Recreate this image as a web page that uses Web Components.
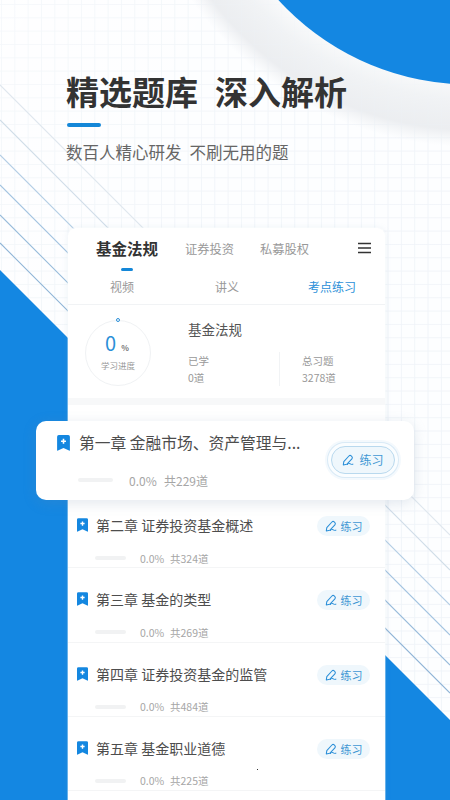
<!DOCTYPE html>
<html lang="zh">
<head>
<meta charset="utf-8">
<title>精选题库</title>
<style>
html,body{margin:0;padding:0;width:450px;height:800px;overflow:hidden;background:#fdfeff;font-family:"Noto Sans CJK SC","Noto Sans",sans-serif}
</style>
</head>
<body>
<promo-page>
  <hero-head title-a="精选题库" title-b="深入解析" sub-a="数百人精心研发" sub-b="不刷无用的题"></hero-head>
  <course-card>
    <course-tabs></course-tabs>
    <sub-nav></sub-nav>
    <progress-summary></progress-summary>
    <chapter-row lifted name="第一章 金融市场、资产管理与..." pct="0.0%" total="共229道"></chapter-row>
    <chapter-row name="第二章 证券投资基金概述" pct="0.0%" total="共324道"></chapter-row>
    <chapter-row name="第三章 基金的类型" pct="0.0%" total="共269道"></chapter-row>
    <chapter-row name="第四章 证券投资基金的监管" pct="0.0%" total="共484道"></chapter-row>
    <chapter-row name="第五章 基金职业道德" pct="0.0%" total="共225道"></chapter-row>
  </course-card>
</promo-page>
<script>
function def(name, html){
  customElements.define(name, class extends HTMLElement{
    constructor(){super();this.attachShadow({mode:'open'});}
    connectedCallback(){
      const a=n=>this.getAttribute(n)||'';
      this.shadowRoot.innerHTML=typeof html==='function'?html(a,this):html;
    }
  });
}
def('promo-page',`<style>
:host{display:block;position:relative;width:450px;height:800px;overflow:hidden;background:#fdfeff}
.art{position:absolute;inset:0;width:450px;height:800px;display:block}
.flow{position:relative;display:flex;flex-direction:column;height:800px}
.speck{position:absolute;left:257px;top:769px;width:1px;height:1px;background:#333}
</style>
<svg class="art" viewBox="0 0 450 800" aria-hidden="true">
<defs>
<pattern id="g" width="13.33" height="13.33" patternUnits="userSpaceOnUse" x="1" y="4">
<path d="M0 0H13.33M0 0V13.33" stroke="#eff4f9" stroke-width="1.5" fill="none"/>
</pattern>
<radialGradient id="sh" gradientUnits="userSpaceOnUse" cx="472" cy="-195" r="342">
<stop offset="0.76" stop-color="#ffffff" stop-opacity="1"/>
<stop offset="0.86" stop-color="#f1f3f5" stop-opacity="1"/>
<stop offset="0.95" stop-color="#e9ebee" stop-opacity=".85"/>
<stop offset="1" stop-color="#eef0f3" stop-opacity="0"/>
</radialGradient>
<linearGradient id="fade" x1="0" y1="0" x2="1" y2="1">
<stop offset="0" stop-color="#fff" stop-opacity=".55"/>
<stop offset=".35" stop-color="#fff" stop-opacity=".1"/>
<stop offset="1" stop-color="#fff" stop-opacity="0"/>
</linearGradient>
</defs>
<rect width="450" height="800" fill="#fdfeff"/>
<rect width="450" height="800" fill="url(#g)"/>
<rect width="450" height="800" fill="url(#fade)"/>
<circle cx="472" cy="-195" r="342" fill="url(#sh)"/>
<rect width="450" height="800" fill="url(#g)" opacity=".35"/>
<circle cx="470" cy="-175" r="259.5" fill="#1487e2"/>
<g fill="none" stroke-width="1.1">
<path d="M0 85L450 535" stroke="#dfe7ee"/>
<path d="M0 120L450 570" stroke="#d0dde8"/>
<path d="M0 155L450 605" stroke="#b4cee4"/>
<path d="M0 185L450 635" stroke="#a2c3e0"/>
<path d="M0 215L450 665" stroke="#97bbda"/>
<path d="M0 243L450 693" stroke="#8fb4d6"/>
</g>
<path d="M0 270L450 720V800H0Z" fill="#1487e2"/>
</svg>
<div class="flow"><slot></slot></div>
<div class="speck"></div>`);

def('hero-head',a=>`<style>
:host{display:block;height:228px;box-sizing:border-box;padding:68px 0 0 66px;color:#333;flex:none}
h1{margin:0;font:700 33px/46px "Noto Sans CJK SC",sans-serif;color:#333;display:flex;gap:17px}
i{display:block;width:34px;height:4px;border-radius:2px;background:#1487d8;margin:9px 0 0 1px}
p{margin:13px 0 0;font:400 16.5px/24px "Noto Sans CJK SC",sans-serif;color:#666;display:flex;gap:8px}
</style>
<h1><span>${a('title-a')}</span><span>${a('title-b')}</span></h1><i></i>
<p><span>${a('sub-a')}</span><span>${a('sub-b')}</span></p>`);

def('course-card',`<style>
:host{display:block;width:317px;margin-left:68px;flex:1;background:#fff;border-radius:8px 8px 0 0;box-shadow:0 0 6px rgba(130,160,190,.14);outline:1px solid rgba(255,255,255,.35)}
</style><slot></slot>`);

def('course-tabs',`<style>
:host{display:flex;align-items:center;height:42px;box-sizing:border-box;padding:0 14px 0 28px;position:relative;font-family:"Noto Sans CJK SC",sans-serif}
.on{font-size:15.5px;font-weight:700;color:#333;width:62px;white-space:nowrap;position:relative;top:-1px}
.on::after{content:"";position:absolute;left:25px;top:31px;width:12px;height:3px;border-radius:2px;background:#1487d8}
.t{font-size:12.25px;color:#999;white-space:nowrap}
.t1{margin-left:27px;width:49px}.t2{margin-left:26px;width:49px}
.m{margin-left:auto;display:block;position:relative;top:-1px}
</style>
<span class="on">基金法规</span><span class="t t1">证券投资</span><span class="t t2">私募股权</span>
<svg class="m" width="13" height="12" viewBox="0 0 13 12" aria-hidden="true"><path d="M.5 1.5H12.5M.5 6H12.5M.5 10.5H12.5" stroke="#333" stroke-width="1.7" fill="none" stroke-linecap="round"/></svg>`);

def('sub-nav',`<style>
:host{display:flex;height:34px;border-bottom:1px solid #f1f3f5;font:400 12px/34px "Noto Sans CJK SC",sans-serif;color:#999;padding-left:42px}
span{white-space:nowrap}
.b{margin-left:81px}
.c{margin-left:69px;color:#2b8fd8}
</style><span>视频</span><span class="b">讲义</span><span class="c">考点练习</span>`);

def('progress-summary',`<style>
:host{display:flex;box-sizing:border-box;height:100px;padding:16px 0 0 17px;border-bottom:7px solid #f7f8f9;font-family:"Noto Sans CJK SC",sans-serif;position:relative}
.ring{flex:none;width:66px;height:66px;margin-top:-1px;box-sizing:border-box;border:1.5px solid #f0f2f4;border-radius:50%;position:relative;display:flex;flex-direction:column;align-items:center;color:#999}
.ring::before{content:"";position:absolute;left:29.5px;top:-3.5px;width:4px;height:4px;box-sizing:border-box;border:1.2px solid #2b8fd8;border-radius:50%;background:#fff}
.val{margin-top:11px;display:flex;align-items:baseline;line-height:22px;margin-left:-2px}
.val b{font-weight:400;font-size:20px;color:#2b8fd8}
.val s{text-decoration:none;font-size:8px;font-weight:700;color:#777;margin-left:5px}
.lb{font-size:8.5px;line-height:12px;margin-top:0}
.info{margin-left:37px;flex:1;color:#999}
h3{margin:-2px 0 0;font:400 13.5px/20px "Noto Sans CJK SC",sans-serif;color:#555}
.cols{display:flex;margin-top:13px}
.col{font-size:10.5px;line-height:17px;width:91px}
.col+.col{border-left:1px solid #f1f3f5;padding-left:22px;width:auto}
</style>
<div class="ring"><div class="val"><b>0</b><s>%</s></div><div class="lb">学习进度</div></div>
<div class="info"><h3>基金法规</h3><div class="cols"><div class="col">已学<br>0道</div><div class="col">总习题<br>3278道</div></div></div>`);

const bm=(w,h)=>`<svg width="${w}" height="${h}" viewBox="0 0 12 15" aria-hidden="true"><path d="M1.6 0H10.4A1.6 1.6 0 0 1 12 1.6V14.2Q12 15 11.2 14.6L6 12.2.8 14.6Q0 15 0 14.2V1.6A1.6 1.6 0 0 1 1.6 0Z" fill="#1487e0"/><path d="M6 3.6V8.2M3.7 5.9H8.3" stroke="#fff" stroke-width="1.5" fill="none"/></svg>`;

def('practice-btn',`<style>
:host{display:inline-flex;align-items:center;justify-content:center;gap:4px;width:53px;height:20px;border-radius:10px;background:#eff7fc;color:#3f97d4;font:400 11px/20px "Noto Sans CJK SC",sans-serif;flex:none}
:host([big]){width:64px;height:28px;border-radius:14px;font-size:12px;gap:5px;box-sizing:border-box;border:1px solid #b9d9ee;box-shadow:0 0 0 3px #fafdff,0 0 0 4px #d9eaf6,0 0 0 6px #f4f9fd}
</style>
<svg width="12" height="12" viewBox="0 0 12 12" aria-hidden="true"><path d="M1.3 10.9L1.8 7.7L6.9 2Q8 .9 9.2 1.9L9.9 2.6Q10.9 3.7 9.9 4.8L4.7 10.3Z" fill="none" stroke="#2b8fd8" stroke-width="1.05" stroke-linejoin="round"/><path d="M5 10.8Q7 8.6 8 9.7T11.3 10.2" stroke="#2b8fd8" stroke-width="1" fill="none"/></svg><span>练习</span>`);

def('chapter-row',(a,el)=>{
 const big=el.hasAttribute('lifted');
 return `<style>
:host{display:flex;flex-direction:column;box-sizing:border-box;height:74.33px;padding:0 15px 0 9px;border-bottom:1px solid #f4f5f6;font-family:"Noto Sans CJK SC",sans-serif;position:relative}
.top{display:flex;align-items:center;height:24px;margin-top:19px}
.ic{display:flex;flex:none;width:19px}
.nm{font-size:14px;line-height:24px;color:#4d4d4d;white-space:nowrap;flex:1}
.sub{display:flex;align-items:center;height:16px;margin-top:13px;padding-left:18px;font-size:10.5px;color:#a6a6a6;white-space:nowrap}
.bar{width:31px;height:4px;border-radius:2px;background:#f1f2f3;margin-right:14px}
.pc{width:30px}
:host([lifted]){height:79px;margin:16px -29px -6px -32px;padding:0 19px 0 21px;border:0;border-radius:10px;background:#fff;box-shadow:0 3px 14px rgba(110,135,165,.2);z-index:2}
:host([lifted]) .top{margin-top:10px}
:host([lifted]) .ic{width:22px}
:host([lifted]) .nm{font-size:15.75px}
:host([lifted]) .sub{margin-top:17px;padding-left:21px;font-size:12px}
:host([lifted]) .bar{width:35px;height:4px;margin-right:16px}
:host([lifted]) .pc{width:35px}
:host([lifted]) .b{position:relative;top:17px}
</style>
<div class="top"><span class="ic">${big?bm(13,16):bm(11,14)}</span><span class="nm">${a('name')}</span><span class="b"><practice-btn ${big?'big':''}></practice-btn></span></div>
<div class="sub"><span class="bar"></span><span class="pc">${a('pct')}</span><span>${a('total')}</span></div>`;
});
</script>
</body>
</html>
